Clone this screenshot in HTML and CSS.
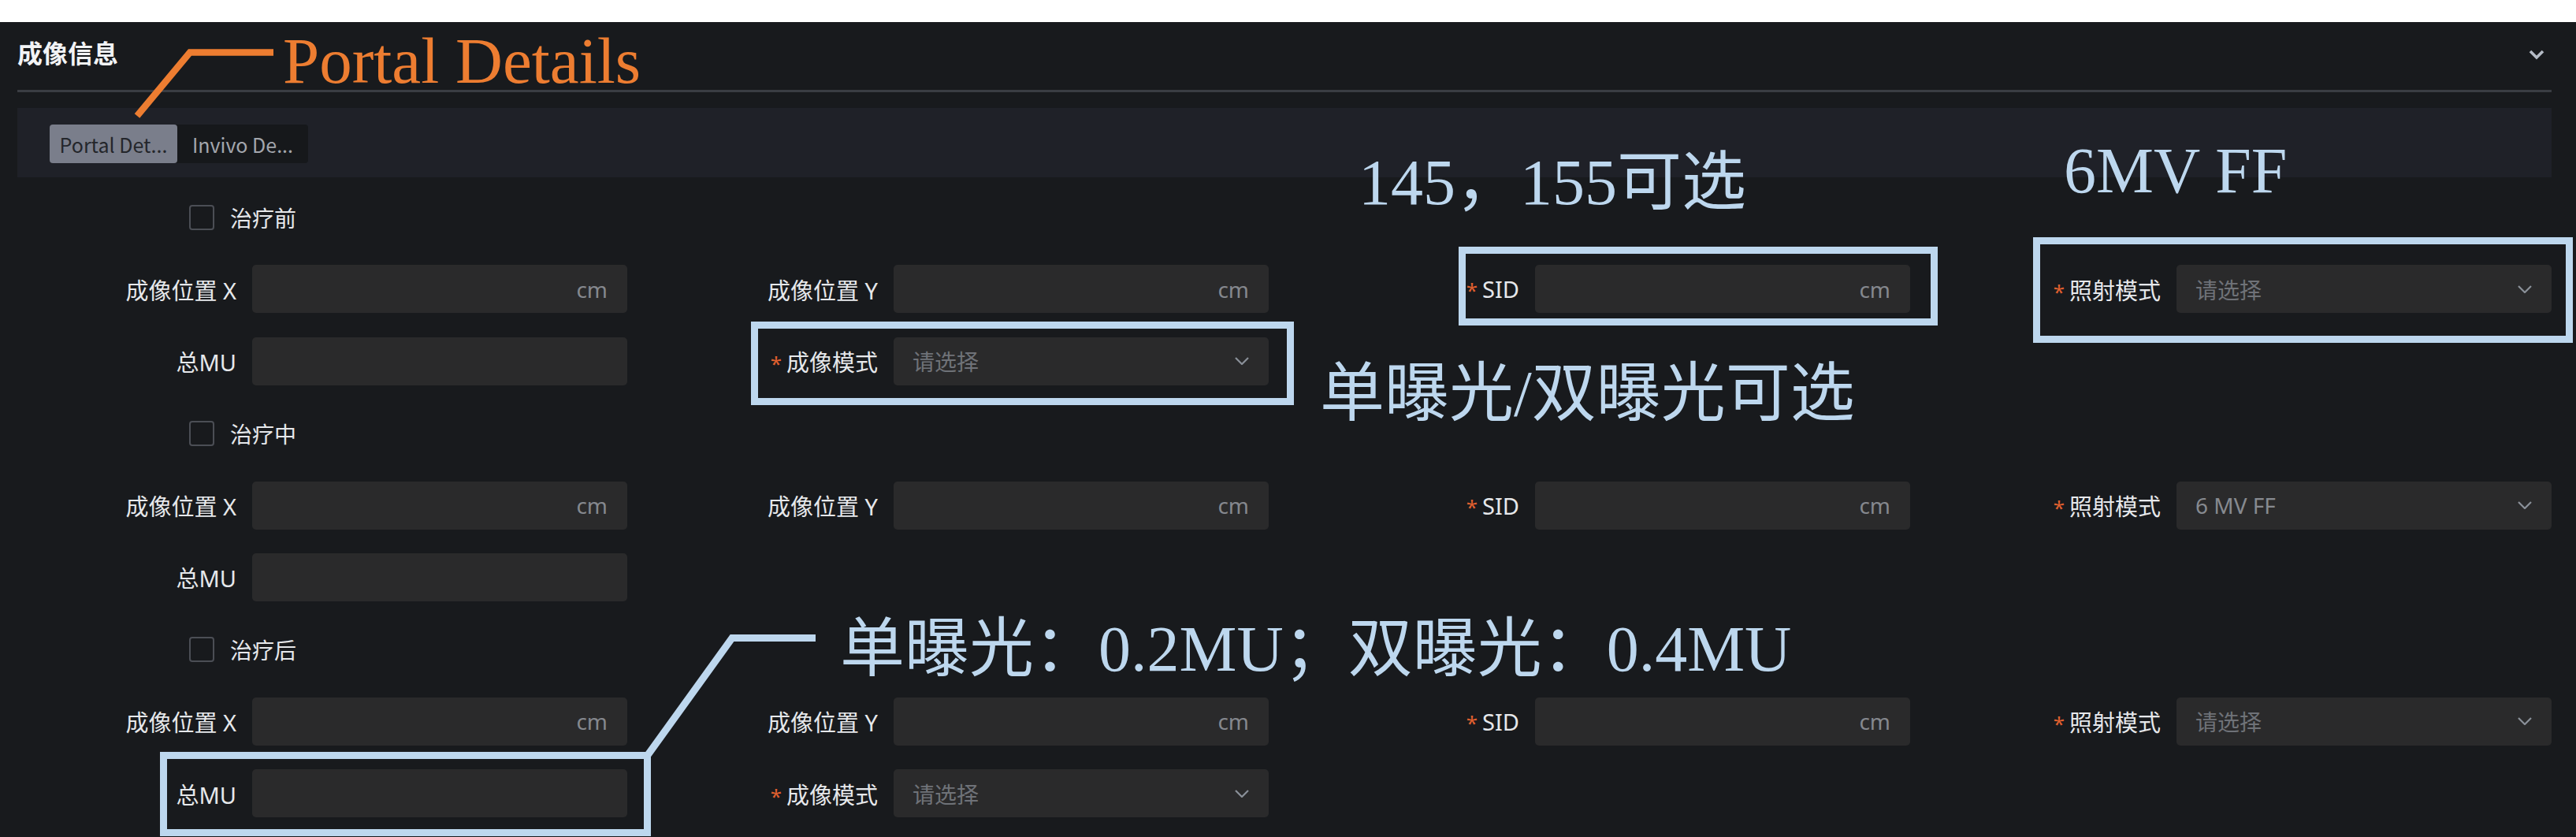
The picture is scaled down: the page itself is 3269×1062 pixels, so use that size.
FILE: index.html
```html
<!DOCTYPE html>
<html lang="zh-CN">
<head>
<meta charset="utf-8">
<title>成像信息</title>
<link rel="stylesheet" href="styles.css">
</head>
<body>
<div class="page">
  <div class="panel">
    <div class="header">
      <div class="title">成像信息</div>
      <svg class="collapse" viewBox="0 0 20 13"><path d="M2 2 L10 10 L18 2" fill="none" stroke="currentColor" stroke-width="3.6"/></svg>
    </div>
    <div class="tabbar">
      <div class="tabs">
        <div class="tab tab-active">Portal Det...</div>
        <div class="tab">Invivo De...</div>
      </div>
    </div>
    <div class="form">
      <div class="row check-row"><span class="box"></span><span class="check-text">治疗前</span></div>
      <div class="row grid4">
        <div class="field"><div class="label">成像位置 X</div><div class="input suffix"><span class="unit">cm</span></div></div>
        <div class="field"><div class="label">成像位置 Y</div><div class="input suffix"><span class="unit">cm</span></div></div>
        <div class="field"><div class="label"><span class="req">*</span>SID</div><div class="input suffix"><span class="unit">cm</span></div></div>
        <div class="field"><div class="label"><span class="req">*</span>照射模式</div><div class="input select"><span class="ph">请选择</span><svg class="chev" viewBox="0 0 18 10"><path d="M1 1 L9 9 L17 1" fill="none" stroke="currentColor" stroke-width="2.2"/></svg></div></div>
      </div>
      <div class="row grid4">
        <div class="field"><div class="label">总MU</div><div class="input"></div></div>
        <div class="field"><div class="label"><span class="req">*</span>成像模式</div><div class="input select"><span class="ph">请选择</span><svg class="chev" viewBox="0 0 18 10"><path d="M1 1 L9 9 L17 1" fill="none" stroke="currentColor" stroke-width="2.2"/></svg></div></div>
      </div>
      <div class="row check-row"><span class="box"></span><span class="check-text">治疗中</span></div>
      <div class="row grid4">
        <div class="field"><div class="label">成像位置 X</div><div class="input suffix"><span class="unit">cm</span></div></div>
        <div class="field"><div class="label">成像位置 Y</div><div class="input suffix"><span class="unit">cm</span></div></div>
        <div class="field"><div class="label"><span class="req">*</span>SID</div><div class="input suffix"><span class="unit">cm</span></div></div>
        <div class="field"><div class="label"><span class="req">*</span>照射模式</div><div class="input select"><span class="val">6 MV FF</span><svg class="chev" viewBox="0 0 18 10"><path d="M1 1 L9 9 L17 1" fill="none" stroke="currentColor" stroke-width="2.2"/></svg></div></div>
      </div>
      <div class="row grid4">
        <div class="field"><div class="label">总MU</div><div class="input"></div></div>
      </div>
      <div class="row check-row"><span class="box"></span><span class="check-text">治疗后</span></div>
      <div class="row grid4">
        <div class="field"><div class="label">成像位置 X</div><div class="input suffix"><span class="unit">cm</span></div></div>
        <div class="field"><div class="label">成像位置 Y</div><div class="input suffix"><span class="unit">cm</span></div></div>
        <div class="field"><div class="label"><span class="req">*</span>SID</div><div class="input suffix"><span class="unit">cm</span></div></div>
        <div class="field"><div class="label"><span class="req">*</span>照射模式</div><div class="input select"><span class="ph">请选择</span><svg class="chev" viewBox="0 0 18 10"><path d="M1 1 L9 9 L17 1" fill="none" stroke="currentColor" stroke-width="2.2"/></svg></div></div>
      </div>
      <div class="row grid4">
        <div class="field"><div class="label">总MU</div><div class="input"></div></div>
        <div class="field"><div class="label"><span class="req">*</span>成像模式</div><div class="input select"><span class="ph">请选择</span><svg class="chev" viewBox="0 0 18 10"><path d="M1 1 L9 9 L17 1" fill="none" stroke="currentColor" stroke-width="2.2"/></svg></div></div>
      </div>
    </div>
  </div>

  <svg class="marks" viewBox="0 0 3269 1062" width="3269" height="1062">
    <polyline points="347,66.5 241,66.5 174,147" fill="none" stroke="#ed7d31" stroke-width="8.5"/>
    <rect x="1855.5" y="317.5" width="599" height="91" fill="none" stroke="#bdd7ee" stroke-width="9"/>
    <rect x="2584.5" y="305.5" width="676" height="125" fill="none" stroke="#bdd7ee" stroke-width="9"/>
    <rect x="957.5" y="412.5" width="680" height="97" fill="none" stroke="#bdd7ee" stroke-width="9"/>
    <rect x="207.5" y="958.5" width="614" height="98" fill="none" stroke="#bdd7ee" stroke-width="9"/>
    <polyline points="1035,809.5 929,809.5 822,958" fill="none" stroke="#bdd7ee" stroke-width="9"/>
  </svg>
  <div class="note note-orange n-portal">Portal Details</div>
  <div class="note n-sid">145，155可选</div>
  <div class="note n-mode">6MV FF</div>
  <div class="note n-exp">单曝光/双曝光可选</div>
  <div class="note n-mu">单曝光：0.2MU；双曝光：0.4MU</div>
</div>
</body>
</html>
```

FILE: styles.css
```css
html, body {
  margin: 0;
  padding: 0;
  background: #ffffff;
}

.page {
  position: relative;
  width: 3269px;
  height: 1062px;
  overflow: hidden;
  padding-top: 28px;
  box-sizing: border-box;
  font-family: "Noto Sans", "Noto Sans CJK SC", sans-serif;
}

.panel {
  background: #181a1d;
  height: 1034px;
  padding: 0 31px 0 22px;
  box-sizing: border-box;
}

.header {
  height: 89px;
  box-sizing: border-box;
  border-bottom: 3px solid #3a3d43;
  display: flex;
  align-items: center;
  justify-content: space-between;
  padding-bottom: 10px;
}

.title {
  color: #f2f3f5;
  font-family: "Noto Sans CJK SC", sans-serif;
  font-size: 32px;
  font-weight: 700;
  line-height: 1;
}

.collapse {
  width: 20px;
  height: 13px;
  color: #b5bcc6;
  margin-right: 9px;
  margin-top: 6px;
}

.tabbar {
  margin-top: 20px;
  height: 88px;
  box-sizing: border-box;
  background: #1f2128;
  padding: 21px 41px;
}

.tabs {
  display: inline-flex;
  background: #16181b;
  border-radius: 4px;
}

.tab {
  height: 49px;
  width: 166px;
  display: flex;
  align-items: center;
  justify-content: center;
  font-family: "Noto Sans CJK SC", sans-serif;
  font-size: 25px;
  color: #a3a6ad;
  border-radius: 4px;
}

.tab-active {
  width: 162px;
  background: #7a7e8b;
  color: #24262b;
}

.form {
  padding-top: 20px;
  display: flex;
  flex-direction: column;
  row-gap: 30.4px;
}

.row {
  height: 61px;
}

.check-row {
  display: flex;
  align-items: center;
  padding-left: 218px;
}

.box {
  width: 32px;
  height: 32px;
  box-sizing: border-box;
  border: 2px solid #4b4e55;
  border-radius: 4px;
}

.check-text {
  margin-left: 20px;
  font-size: 28px;
  color: #e6e8eb;
}

.grid4 {
  display: grid;
  grid-template-columns: repeat(4, 1fr);
  column-gap: 40px;
}

.field {
  display: grid;
  grid-template-columns: 298px 1fr;
  align-items: center;
}

.label {
  text-align: right;
  padding-right: 20px;
  font-size: 29px;
  color: #e6e8eb;
  white-space: nowrap;
}

.req {
  color: #e0602f;
  margin-right: 6px;
  font-size: 26px;
}

.input {
  height: 61px;
  background: #2a2a2b;
  border-radius: 5px;
  box-sizing: border-box;
  display: flex;
  align-items: center;
  font-size: 28px;
}

.suffix {
  justify-content: flex-end;
  padding: 0 25px;
}

.unit {
  color: #85888e;
}

.select {
  justify-content: space-between;
  padding: 0 25px 0 24px;
}

.ph {
  color: #6f7278;
}

.val {
  color: #878a90;
}

.chev {
  width: 18px;
  height: 10px;
  color: #8a9099;
}

.marks {
  position: absolute;
  left: 0;
  top: 0;
  pointer-events: none;
}

.note {
  position: absolute;
  font-family: "Liberation Serif", "Noto Sans CJK SC", serif;
  font-size: 82px;
  line-height: 82px;
  color: #bdd7ee;
  white-space: nowrap;
}

.note-orange {
  color: #ed7d31;
  font-size: 83px;
  line-height: 83px;
}

.n-portal { left: 359px; top: 36px; }
.n-sid { left: 1724px; top: 191px; }
.n-mode { left: 2619px; top: 176px; }
.n-exp { left: 1675px; top: 459px; }
.n-mu { left: 1066px; top: 783px; }
```
